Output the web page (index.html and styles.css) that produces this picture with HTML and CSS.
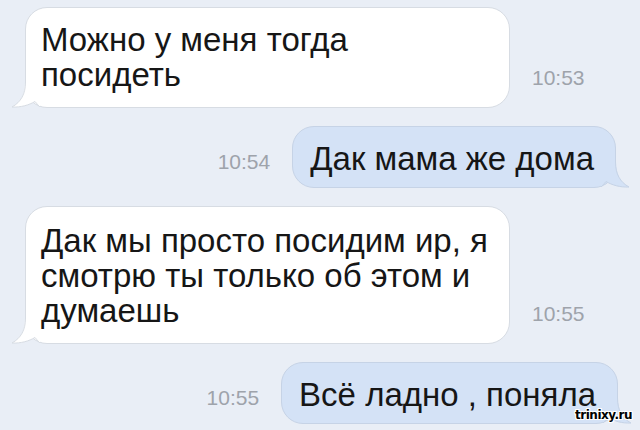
FILE: index.html
```html
<!DOCTYPE html>
<html lang="ru">
<head>
    <meta charset="UTF-8">
    <meta name="viewport" content="width=device-width, initial-scale=1.0">
    <title>Переписка</title>
    <link rel="stylesheet" href="styles.css">
</head>
<body>
    <div class="chat">
        <div class="row row-in">
            <div class="bubble bubble-in">
                Можно у меня тогда<br>посидеть
                <svg class="tail tail-in" width="30" height="26" viewBox="0 0 30 26">
                    <path class="tail-fill" d="M15,0 C15,12 11,20 2,25 C11,25.5 19,23 25,19.5 L30,25 L30,0 Z"/>
                    <path class="tail-line" d="M15.5,0 C15.5,12 11,20 2,25 C11,25.5 19,23 25,19.5 C27,22 29,24 30,25"/>
                </svg>
            </div>
            <span class="time">10:53</span>
        </div>

        <div class="row row-out">
            <span class="time">10:54</span>
            <div class="bubble bubble-out">
                Дак мама же дома
                <svg class="tail tail-out" width="30" height="26" viewBox="0 0 30 26">
                    <path class="tail-fill" d="M15,0 C15,12 19,20 28,25 C19,25.5 11,23 5,19.5 L0,25 L0,0 Z"/>
                    <path class="tail-line" d="M14.5,0 C14.5,12 19,20 28,25 C19,25.5 11,23 5,19.5 C3,22 1,24 0,25"/>
                </svg>
            </div>
        </div>

        <div class="row row-in">
            <div class="bubble bubble-in tall">
                Дак мы просто посидим ир, я<br>смотрю ты только об этом и<br>думаешь
                <svg class="tail tail-in" width="30" height="26" viewBox="0 0 30 26">
                    <path class="tail-fill" d="M15,0 C15,12 11,20 2,25 C11,25.5 19,23 25,19.5 L30,25 L30,0 Z"/>
                    <path class="tail-line" d="M15.5,0 C15.5,12 11,20 2,25 C11,25.5 19,23 25,19.5 C27,22 29,24 30,25"/>
                </svg>
            </div>
            <span class="time">10:55</span>
        </div>

        <div class="row row-out last">
            <span class="time">10:55</span>
            <div class="bubble bubble-out">
                Всё ладно , поняла
                <svg class="tail tail-out" width="30" height="26" viewBox="0 0 30 26">
                    <path class="tail-fill" d="M15,0 C15,12 19,20 28,25 C19,25.5 11,23 5,19.5 L0,25 L0,0 Z"/>
                    <path class="tail-line" d="M14.5,0 C14.5,12 19,20 28,25 C19,25.5 11,23 5,19.5 C3,22 1,24 0,25"/>
                </svg>
            </div>
        </div>
    </div>

    <span class="mark">trinixy.ru</span>
</body>
</html>
```

FILE: styles.css
```css
html, body {
    margin: 0;
    padding: 0;
    height: 430px;
    overflow: hidden;
}
body {
    position: relative;
    background-color: #e9eef6;
    font-family: "Liberation Sans", Arial, sans-serif;
    color: #161616;
}
.chat {
    display: flex;
    flex-direction: column;
    gap: 18px;
    padding-top: 7px;
}
.row {
    display: flex;
    align-items: flex-end;
    gap: 22px;
}
.row-in { padding-left: 25px; }
.row-out { justify-content: flex-end; padding-right: 24px; }
.row-out.last { padding-right: 22px; }

.bubble {
    position: relative;
    font-size: 33px;
    line-height: 35px;
    border-radius: 22px;
    box-sizing: border-box;
}
.bubble-in {
    width: 485px;
    padding: 14px 14px 15px 15px;
    background: #ffffff;
    border: 1px solid #d7dce3;
}
.bubble-in.tall { padding-top: 16px; }
.bubble-out {
    padding: 14px 21px 11px 17px;
    background: #d4e2f6;
    border: 1px solid #c6d3e6;
}
.tail {
    position: absolute;
    bottom: -1px;
}
.tail-in { left: -16px; }
.tail-out { right: -16px; }
.bubble-in .tail-fill { fill: #ffffff; }
.bubble-in .tail-line { fill: none; stroke: #d7dce3; stroke-width: 1; }
.bubble-out .tail-fill { fill: #d4e2f6; }
.bubble-out .tail-line { fill: none; stroke: #c6d3e6; stroke-width: 1; }

.time {
    font-size: 21px;
    color: #9ea3ab;
    margin-bottom: 18px;
}
.row-out .time { margin-bottom: 14px; }

.mark {
    position: absolute;
    right: 8px;
    bottom: 8px;
    font-family: "DejaVu Sans", sans-serif;
    font-weight: bold;
    font-size: 12px;
    letter-spacing: -0.5px;
    color: #000;
    text-shadow: 1px 0 0 #fff, -1px 0 0 #fff, 0 1px 0 #fff, 0 -1px 0 #fff,
        1px 1px 0 #fff, -1px -1px 0 #fff, 1px -1px 0 #fff, -1px 1px 0 #fff;
}
```
